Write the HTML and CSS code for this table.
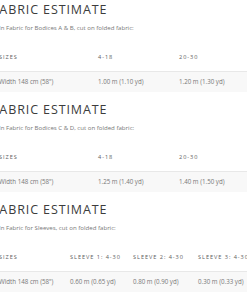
FILE: index.html
```html
<!DOCTYPE html>
<html>
<head>
<meta charset="utf-8">
<link rel="stylesheet" href="styles.css">
</head>
<body>
<div class="page">
  <section class="estimate">
    <h2 class="title">FABRIC ESTIMATE</h2>
    <p class="note">In Fabric for Bodices A &amp; B, cut on folded fabric:</p>
    <div class="table cols-3a">
      <div class="head">Sizes</div><div class="head">4-18</div><div class="head">20-30</div>
      <div class="cell">Width 148 cm (58")</div><div class="cell">1.00 m (1.10 yd)</div><div class="cell">1.20 m (1.30 yd)</div>
    </div>
  </section>
  <section class="estimate">
    <h2 class="title">FABRIC ESTIMATE</h2>
    <p class="note">In Fabric for Bodices C &amp; D, cut on folded fabric:</p>
    <div class="table cols-3a">
      <div class="head">Sizes</div><div class="head">4-18</div><div class="head">20-30</div>
      <div class="cell">Width 148 cm (58")</div><div class="cell">1.25 m (1.40 yd)</div><div class="cell">1.40 m (1.50 yd)</div>
    </div>
  </section>
  <section class="estimate">
    <h2 class="title">FABRIC ESTIMATE</h2>
    <p class="note">In Fabric for Sleeves, cut on folded fabric:</p>
    <div class="table cols-4">
      <div class="head">Sizes</div><div class="head">Sleeve 1: 4-30</div><div class="head">Sleeve 2: 4-30</div><div class="head">Sleeve 3: 4-30</div>
      <div class="cell">Width 148 cm (58")</div><div class="cell">0.60 m (0.65 yd)</div><div class="cell">0.80 m (0.90 yd)</div><div class="cell">0.30 m (0.33 yd)</div>
    </div>
  </section>
</div>
</body>
</html>
```
FILE: styles.css
```css
html, body {
  margin: 0;
  padding: 0;
  background: #ffffff;
  overflow: hidden;
}
.page {
  margin-left: -1px;
  width: 280px;
  font-family: "Open Sans", sans-serif;
}
.estimate {
  height: 100px;
}
.title {
  margin: 0 0 0 -7px;
  font-family: "Open Sans", sans-serif;
  font-weight: 500;
  font-size: 12.5px;
  line-height: 19px;
  color: #3c3c3c;
  letter-spacing: 0.9px;
}
.note {
  margin: 3.5px 0 0 0;
  font-size: 6.1px;
  line-height: 10px;
  color: #777777;
  letter-spacing: 0;
}
.table {
  display: grid;
  margin-top: 10.5px;
}
.cols-3a { grid-template-columns: 99px 81px 100px; }
.cols-4 { grid-template-columns: 71px 63px 65px 81px; }
.head {
  height: 28px;
  line-height: 28px;
  font-size: 5.6px;
  font-weight: 500;
  text-transform: uppercase;
  letter-spacing: 0.95px;
  color: #5e5e5e;
  white-space: nowrap;
}
.cell {
  height: 20px;
  line-height: 20px;
  border-top: 1px solid #e8e8e8;
  background: #f8f8f8;
  font-size: 6.2px;
  color: #777777;
  white-space: nowrap;
}
```
